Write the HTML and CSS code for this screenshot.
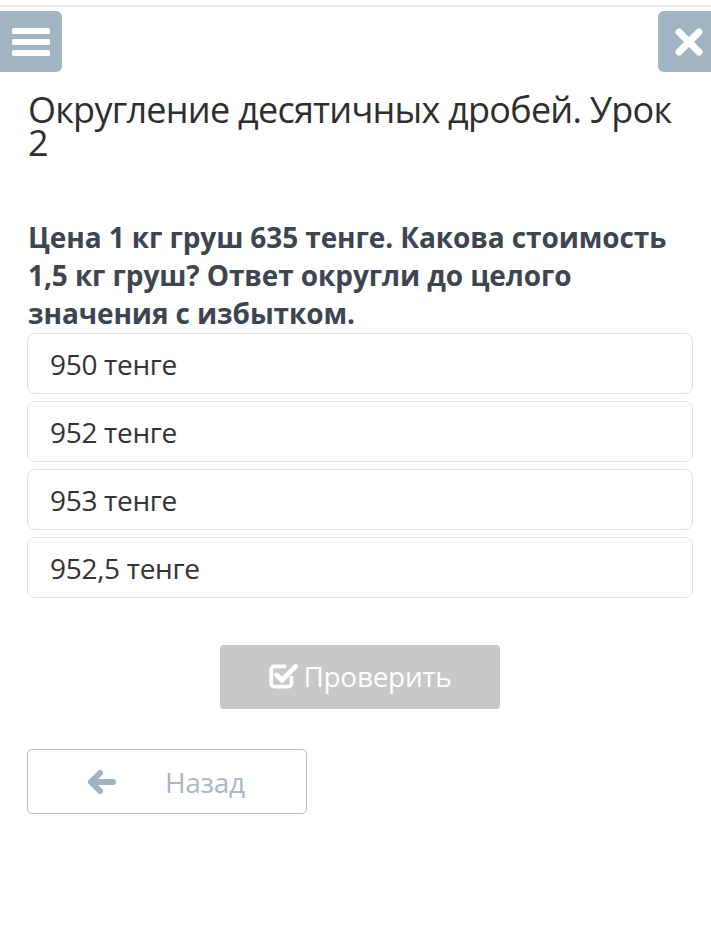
FILE: index.html
```html
<!DOCTYPE html>
<html lang="ru">
<head>
    <meta charset="UTF-8">
    <meta name="viewport" content="width=device-width, initial-scale=1.0">
    <title>Округление десятичных дробей</title>
    <link rel="stylesheet" href="styles.css">
</head>
<body>
    <div class="topbar">
        <button class="icon-btn menu-btn" aria-label="Меню">
            <svg width="38" height="30" viewBox="0 0 38 30">
                <rect x="0" y="1" width="38" height="6" rx="1.5" fill="#fff"/>
                <rect x="0" y="12" width="38" height="6" rx="1.5" fill="#fff"/>
                <rect x="0" y="23" width="38" height="6" rx="1.5" fill="#fff"/>
            </svg>
        </button>
        <button class="icon-btn close-btn" aria-label="Закрыть">
            <svg width="30" height="30" viewBox="0 0 30 30">
                <path d="M5 5 L25 25 M25 5 L5 25" stroke="#fff" stroke-width="7" stroke-linecap="round"/>
            </svg>
        </button>
    </div>

    <div class="content">
        <h1 class="lesson-title">Округление десятичных дробей. Урок 2</h1>

        <p class="question">Цена 1 кг груш 635 тенге. Какова стоимость 1,5 кг груш? Ответ округли до целого значения с избытком.</p>

        <div class="options">
            <div class="option">950 тенге</div>
            <div class="option">952 тенге</div>
            <div class="option">953 тенге</div>
            <div class="option">952,5 тенге</div>
        </div>

        <div class="check-row">
            <button class="check-btn">
                <svg width="32" height="30" viewBox="0 0 30 28">
                    <path d="M22 14 V21 A3 3 0 0 1 19 24 H6 A3 3 0 0 1 3 21 V8 A3 3 0 0 1 6 5 H17" fill="none" stroke="#fff" stroke-width="3.5"/>
                    <path d="M8 13 L13 18 L26 5" fill="none" stroke="#fff" stroke-width="4.5" stroke-linecap="round" stroke-linejoin="round"/>
                </svg>
                Проверить
            </button>
        </div>

        <button class="back-btn">
            <svg width="28" height="24" viewBox="0 0 28 24">
                <path d="M12 3 L3 12 L12 21 M4 12 H25" fill="none" stroke="#9fb3c2" stroke-width="6" stroke-linecap="round" stroke-linejoin="round"/>
            </svg>
            <span>Назад</span>
        </button>
    </div>
</body>
</html>
```

FILE: styles.css
```css
body {
    font-family: "Open Sans", "Noto Sans", sans-serif;
    background-color: #fff;
    margin: 0;
    padding: 0;
    color: #333;
}
.topbar {
    display: flex;
    justify-content: space-between;
    border-top: 2px solid #ececec;
    margin-top: 5px;
    padding-top: 4px;
}
.icon-btn {
    border: none;
    background-color: #a0b4c2;
    height: 61px;
    display: flex;
    align-items: center;
    justify-content: center;
    padding: 0;
}
.menu-btn {
    width: 62px;
    border-radius: 0 6px 6px 0;
}
.close-btn {
    width: 53px;
    border-radius: 6px 0 0 6px;
    justify-content: flex-start;
    padding-left: 16px;
}
.content {
    padding: 0 18px 0 27px;
}
.lesson-title {
    font-weight: normal;
    font-size: 36px;
    line-height: 33px;
    color: #2e2e2e;
    margin: 21px 0 0 1px;
    letter-spacing: -0.75px;
}
.question {
    font-weight: bold;
    font-size: 28px;
    line-height: 38px;
    color: #3c4550;
    margin: 59px 0 0 1px;
    letter-spacing: -0.1px;
}
.options {
    margin-top: 1px;
    display: flex;
    flex-direction: column;
    gap: 7px;
}
.option {
    box-sizing: border-box;
    border: 1px solid #e2e2e2;
    border-radius: 8px;
    height: 61px;
    display: flex;
    align-items: center;
    padding-left: 22px;
    font-size: 28px;
    letter-spacing: -0.3px;
    color: #333;
}
.check-row {
    display: flex;
    justify-content: center;
    margin-top: 47px;
}
.check-btn {
    width: 280px;
    height: 64px;
    border: none;
    border-radius: 4px;
    background-color: #c8c8c8;
    color: #fff;
    font-family: inherit;
    font-size: 28px;
    letter-spacing: -0.3px;
    display: flex;
    align-items: center;
    justify-content: center;
    gap: 3px;
    padding: 0 0 2px 0;
}
.back-btn {
    margin-top: 40px;
    width: 280px;
    height: 65px;
    border: 1px solid #b0bcc4;
    border-radius: 5px;
    background-color: #fff;
    display: flex;
    align-items: center;
    padding: 0 0 0 60px;
    font-family: inherit;
    font-size: 28px;
    letter-spacing: -0.3px;
    color: #a8b8c4;
}
.back-btn span {
    margin-left: 49px;
}
```
